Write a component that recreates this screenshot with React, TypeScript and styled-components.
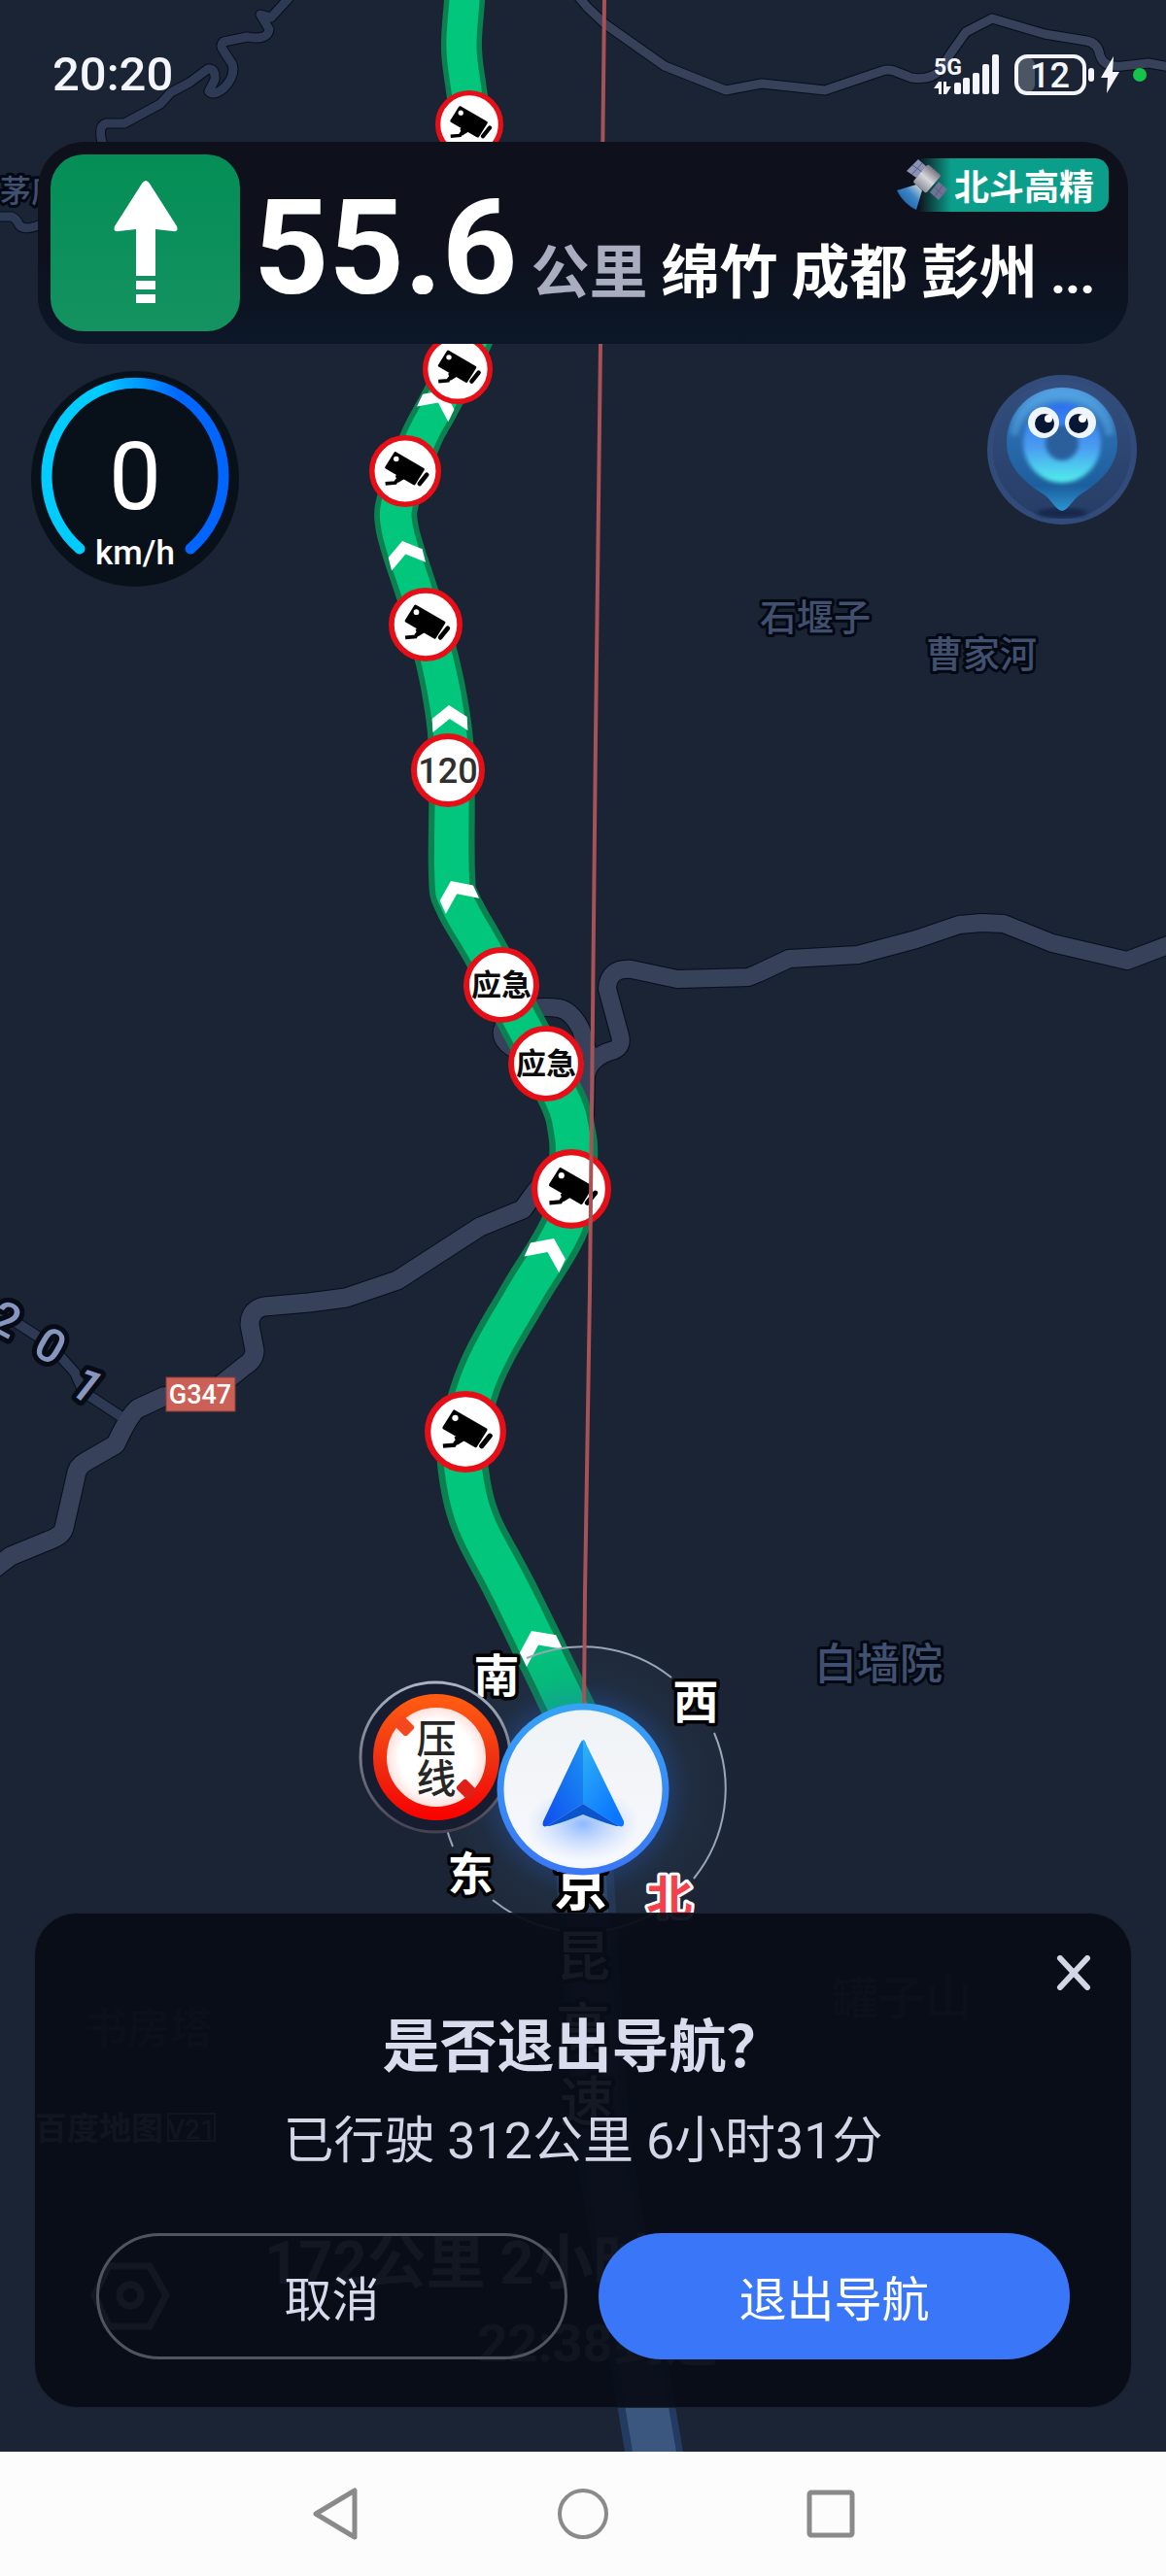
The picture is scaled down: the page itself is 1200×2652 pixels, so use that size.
import React from "react";
import styled, { createGlobalStyle } from "styled-components";

const LATIN = '"Roboto", "Noto Sans CJK SC", sans-serif';
const HAN = '"Noto Sans CJK SC", sans-serif';

const GlobalStyle = createGlobalStyle`
  * { box-sizing: border-box; }
  body { margin: 0; background: #1a2434; font-family: ${LATIN}; }
  button { font: inherit; border: 0; padding: 0; background: none; cursor: pointer; }
`;

/* ---------- shell ---------- */

const Page = styled.div`
  display: flex;
  flex-direction: column;
  min-height: 100vh;
`;

const Stage = styled.main`
  position: relative;
  display: flex;
  flex: 1;
  flex-direction: column;
  overflow: hidden;
  background: #1a2434;
`;

const MapCanvas = styled.svg`
  position: absolute;
  inset: 0;
  width: 100%;
  height: 100%;
`;

const Spacer = styled.div`
  flex: 1;
`;

/* ---------- status bar ---------- */

const StatusBar = styled.div`
  position: relative;
  display: flex;
  align-items: center;
  justify-content: space-between;
  height: 146px;
  padding: 8px 20px 0 54px;
  color: #f3f5fa;
`;

const Clock = styled.time`
  font-size: 49px;
  font-weight: 500;
  line-height: 60px;
`;

const StatusIcons = styled.svg`
  width: 220px;
  height: 48px;
`;

/* ---------- guidance banner ---------- */

const Banner = styled.section`
  position: relative;
  display: flex;
  align-items: center;
  gap: 14px;
  margin: 0 39px;
  padding: 13px;
  border-radius: 48px;
  background: linear-gradient(#0e101b 50%, #0b1728);
`;

const TurnTile = styled.div`
  display: flex;
  align-items: center;
  justify-content: center;
  flex: none;
  width: 195px;
  height: 182px;
  border-radius: 34px;
  background: linear-gradient(#048e56, #149260);
`;

const Guidance = styled.div`
  display: flex;
  align-items: baseline;
  gap: 14px;
  min-width: 0;
  padding-top: 12px;
  white-space: nowrap;
`;

const Distance = styled.strong`
  color: #fff;
  font-size: 135px;
  font-weight: 700;
  line-height: 164px;
`;

const Unit = styled.span`
  color: #a9adbf;
  font: 700 60px/72px ${HAN};
`;

const Places = styled.span`
  color: #fff;
  font: 700 60px/72px ${HAN};
`;

const More = styled.span`
  font: 900 50px/72px ${LATIN};
`;

const PrecisionBadge = styled.div`
  position: absolute;
  top: 17px;
  right: 20px;
  display: flex;
  align-items: center;
  height: 55px;
  padding: 0 15px 0 0;
  border-radius: 0 14px 14px 0;
  background: linear-gradient(90deg, transparent 26px, #0b9f8b 60px);
  color: #fff;
  font: 700 36px/55px ${HAN};
`;

/* ---------- map widgets ---------- */

const Widgets = styled.div`
  position: relative;
  display: flex;
  align-items: flex-start;
  justify-content: space-between;
  padding: 28px 30px 0 32px;
`;

const Speedometer = styled.div`
  position: relative;
  display: flex;
  flex-direction: column;
  align-items: center;
  width: 214px;
  height: 222px;
  padding-top: 60px;
  border-radius: 50%;
  background: #08101a;
  color: #fff;
`;

const SpeedArc = styled.svg`
  position: absolute;
  inset: 0;
`;

const SpeedValue = styled.span`
  font-size: 96px;
  font-weight: 400;
  line-height: 98px;
`;

const SpeedUnit = styled.span`
  font-size: 35px;
  font-weight: 500;
  line-height: 60px;
`;

const Assistant = styled.button`
  margin-top: 4px;
  width: 154px;
  height: 154px;
`;

/* ---------- exit dialog ---------- */

const Dialog = styled.section`
  position: relative;
  display: flex;
  flex-direction: column;
  align-items: center;
  margin: 0 35px 45px;
  padding: 93px 63px 49px;
  border: 1px solid rgba(110, 130, 170, 0.16);
  border-radius: 44px;
  background: rgba(8, 13, 23, 0.95);
  text-align: center;
`;

const DialogTitle = styled.h1`
  margin: 0;
  color: #d9dcec;
  font: 700 59px/80px ${HAN};
`;

const DialogText = styled.p`
  margin: 26px 0 58px;
  color: #d2d6e6;
  font: 400 52px/72px ${LATIN};
`;

const DialogActions = styled.div`
  display: grid;
  grid-template-columns: 1fr 1fr;
  gap: 32px;
  align-self: stretch;
`;

const ActionButton = styled.button<{ $primary?: boolean }>`
  && {
    height: 130px;
    border: ${(p) => (p.$primary ? "0" : "3px solid #50545e")};
    border-radius: 65px;
    background: ${(p) => (p.$primary ? "#3a76f8" : "transparent")};
    color: ${(p) => (p.$primary ? "#fff" : "#d6daea")};
    font: 400 49px/72px ${HAN};
  }
`;

const CloseButton = styled.button`
  position: absolute;
  top: 29px;
  right: 27px;
  display: flex;
  align-items: center;
  justify-content: center;
  width: 64px;
  height: 64px;
`;

/* ---------- system navigation ---------- */

const SystemNav = styled.nav`
  display: flex;
  justify-content: center;
  height: 128px;
  background: #fcfcfc;
`;

const SystemKey = styled.button`
  display: flex;
  align-items: center;
  justify-content: center;
  width: 255px;
`;

/* ---------- map geometry ---------- */

type Knot = [number, number, number];

/* x, y, full width of the road at that point */
const ROUTE: Knot[] = [
  [480, -40, 42], [478, 0, 42], [475, 50, 42], [481, 100, 42], [490, 170, 42],
  [500, 250, 42], [500, 310, 42], [484, 354, 42], [452, 416, 43], [433, 452, 43],
  [411, 510, 44], [409, 545, 44], [431, 616, 44], [450, 680, 45], [462, 745, 46],
  [465, 800, 47], [465, 900, 48], [471, 930, 48], [502, 985, 47], [538, 1055, 47],
  [578, 1130, 48], [588, 1163, 49], [590, 1195, 50], [583, 1257, 50], [541, 1330, 50],
  [508, 1387, 50], [489, 1430, 50], [477, 1480, 51], [477, 1515, 52], [490, 1568, 52],
  [527, 1640, 53], [584, 1757, 54], [604, 1800, 54],
];

function spline(knots: Knot[]): Knot[] {
  const out: Knot[] = [];
  for (let i = 0; i < knots.length - 1; i++) {
    const p0 = knots[Math.max(0, i - 1)];
    const p1 = knots[i];
    const p2 = knots[i + 1];
    const p3 = knots[Math.min(knots.length - 1, i + 2)];
    for (let s = 0; s < 8; s++) {
      const t = s / 8;
      out.push(
        [0, 1, 2].map(
          (k) =>
            0.5 *
            (2 * p1[k] +
              (p2[k] - p0[k]) * t +
              (2 * p0[k] - 5 * p1[k] + 4 * p2[k] - p3[k]) * t * t +
              (3 * p1[k] - p0[k] - 3 * p2[k] + p3[k]) * t * t * t)
        ) as Knot
      );
    }
  }
  out.push(knots[knots.length - 1]);
  return out;
}

function ribbon(knots: Knot[], scale: number): string {
  const pts = spline(knots);
  const left: string[] = [];
  const right: string[] = [];
  pts.forEach(([x, y, w], i) => {
    const a = pts[Math.max(0, i - 1)];
    const b = pts[Math.min(pts.length - 1, i + 1)];
    const dx = b[0] - a[0];
    const dy = b[1] - a[1];
    const len = Math.hypot(dx, dy) || 1;
    const h = (w * scale) / 2;
    left.push(`${(x + (dy / len) * h).toFixed(1)},${(y - (dx / len) * h).toFixed(1)}`);
    right.unshift(`${(x - (dy / len) * h).toFixed(1)},${(y + (dx / len) * h).toFixed(1)}`);
  });
  return [...left, ...right].join(" ");
}

const ROADS: { d: string; w: number; c: string }[] = [
  { w: 9, c: "#2e3a53", d: "M300,-5 L279,18 L268,15 L277,30 Q276,42 254,38 L230,43 Q226,47 230,52 L239,66 Q243,78 230,91 Q220,99 215,94 L221,82 Q222,70 214,71 L195,85 L176,95 L165,107 L128,127 L109,127 Q100,130 106,150" },
  { w: 9, c: "#2e3a53", d: "M-5,223 L12,223 Q17,225 20,232 Q26,238 42,231" },
  { w: 9, c: "#374159", d: "M590,-10 L604,7 L623,25 L684,68 L747,93 L784,86 L849,93 L908,73 Q914,71 920,73 L938,80 Q958,83 968,72 L977,57 L994,33 L1021,19 L1075,35 L1118,42 Q1130,44 1132,57 Q1136,70 1155,68 L1182,65 L1210,70" },
  { w: 10, c: "#2e3a53", d: "M-20,1335 L19,1363 L50,1383 L77,1413 L86,1433 L124,1458" },
  { w: 18, c: "#374159", d: "M602,1150 L603,1108 Q606,1088 632,1081 Q641,1077 638,1066 L625,1018 Q626,996 650,998 L697,1008 L770,1006 L780,1002 L812,987 L883,983 L943,967 L987,952 L1010,950 L1033,951 L1083,971 L1160,989 L1210,970" },
  { w: 18, c: "#374159", d: "M540,1085 Q508,1072 520,1054 Q540,1033 575,1038 Q588,1040 598,1060 L606,1088" },
  { w: 19, c: "#374159", d: "M570,1205 L551,1227 L538,1245 L494,1263 L463,1283 L409,1318 L356,1336 L318,1341 L272,1345 Q257,1348 257,1364 L262,1390 Q262,1400 252,1406 L222,1430 L168,1438 L142,1450 Q134,1455 119,1487 L88,1505 Q79,1510 78,1520 L66,1573 Q64,1581 50,1586 L11,1602 L-10,1618" },
];

const CHEVRONS: [number, number, number, number][] = [
  [457, 402, 26, 1], [414, 557, -14, 1], [462, 726, -3, 1], [464, 907, -25, 1.05],
  [570, 1275, 25, 1.1], [547, 1679, -26, 1.15],
];

const CAMERAS: [number, number, number][] = [
  [483, 128, 35], [471, 380, 36], [417, 485, 37], [438, 643, 38], [588, 1224, 41], [479, 1474, 42],
];

const SIGNS: [number, number, number, string][] = [
  [461, 793, 38, "120"], [516, 1014, 39, "应急"], [562, 1095, 39, "应急"],
];

const Halo = styled.text<{ $size: number; $fill: string; $halo: string; $edge: number; $weight?: number }>`
  font-family: ${LATIN};
  font-size: ${(p) => p.$size}px;
  font-weight: ${(p) => p.$weight ?? 500};
  fill: ${(p) => p.$fill};
  stroke: ${(p) => p.$halo};
  stroke-width: ${(p) => p.$edge}px;
  stroke-linejoin: round;
  paint-order: stroke;
  text-anchor: middle;
`;

const Plain = styled.text<{ $size: number; $fill: string; $weight?: number }>`
  font-family: ${LATIN};
  font-size: ${(p) => p.$size}px;
  font-weight: ${(p) => p.$weight ?? 500};
  fill: ${(p) => p.$fill};
  text-anchor: middle;
`;

function PlaceLabel({ x, y, size, children }: { x: number; y: number; size: number; children: string }) {
  return (
    <Halo x={x} y={y} $size={size} $fill="#40506e" $halo="#030913" $edge={6}>
      {children}
    </Halo>
  );
}

function CompassLabel({ x, y, children }: { x: number; y: number; children: string }) {
  return (
    <Halo x={x} y={y} $size={47} $fill="#fff" $halo="#000" $edge={7} $weight={700}>
      {children}
    </Halo>
  );
}

function Camera({ x, y, r }: { x: number; y: number; r: number }) {
  return (
    <g transform={`translate(${x} ${y}) scale(${r / 40})`}>
      <circle r="37" fill="#fff" stroke="#e60f17" strokeWidth="6" />
      <path d="M-11,-20 L20,-2 L10,14 L-21,-4 Z" fill="#000" stroke="#000" strokeWidth="3" strokeLinejoin="round" />
      <circle cx="-10" cy="-13.500" r="3" fill="#fff" />
      <path d="M24,4 L16,14" stroke="#000" strokeWidth="5" strokeLinecap="round" />
      <path d="M-9,4 L-6,8 Q-9,9 -11,13 L-22,14" fill="none" stroke="#000" strokeWidth="4" />
      <path d="M-11,5 L0,8 L-8,13 Z" fill="#000" />
    </g>
  );
}

function NavigationMap() {
  return (
    <MapCanvas viewBox="0 0 1200 2524" preserveAspectRatio="xMidYMid slice" aria-label="导航地图">
      <defs>
        <linearGradient id="ring" x1="0" y1="0" x2="0" y2="1">
          <stop offset="0" stopColor="#36a2f6" />
          <stop offset="1" stopColor="#3a78f6" />
        </linearGradient>
        <linearGradient id="disc" x1="0" y1="0" x2="0" y2="1">
          <stop offset="0" stopColor="#eef3f6" />
          <stop offset="0.5" stopColor="#f4f5f9" />
          <stop offset="1" stopColor="#f6f9ff" />
        </linearGradient>
        <radialGradient id="glow">
          <stop offset="0.55" stopColor="#2a60c0" stopOpacity="0.3" />
          <stop offset="0.7" stopColor="#2a4a80" stopOpacity="0.12" />
          <stop offset="1" stopColor="#2a4a80" stopOpacity="0" />
        </radialGradient>
        <radialGradient id="shade">
          <stop offset="0" stopColor="#6ea4ff" stopOpacity="0.75" />
          <stop offset="1" stopColor="#a6c8ff" stopOpacity="0" />
        </radialGradient>
        <linearGradient id="wingLeft" x1="1" y1="0" x2="0" y2="1">
          <stop offset="0" stopColor="#1c95f2" />
          <stop offset="1" stopColor="#0f4cf0" />
        </linearGradient>
        <linearGradient id="wingRight" x1="0" y1="0" x2="0.600" y2="1">
          <stop offset="0" stopColor="#2fb4f5" />
          <stop offset="1" stopColor="#0a76ff" />
        </linearGradient>
        <linearGradient id="warn" x1="0" y1="0" x2="0" y2="1">
          <stop offset="0" stopColor="#ff5a12" />
          <stop offset="0.6" stopColor="#ee2a10" />
          <stop offset="1" stopColor="#f80500" />
        </linearGradient>
        <radialGradient id="warnDisc">
          <stop offset="0.65" stopColor="#fff" />
          <stop offset="1" stopColor="#ffd2cc" />
        </radialGradient>
        <linearGradient id="warnEdge" x1="0" y1="0" x2="0" y2="1">
          <stop offset="0" stopColor="#aab4c2" />
          <stop offset="1" stopColor="#46414f" />
        </linearGradient>
      </defs>

      {ROADS.map((r) => (
        <path key={r.d} d={r.d} fill="none" stroke="#070e1d" strokeWidth={r.w + 2} strokeLinejoin="round" />
      ))}
      {ROADS.map((r) => (
        <path key={r.d} d={r.d} fill="none" stroke={r.c} strokeWidth={r.w} strokeLinejoin="round" />
      ))}

      <PlaceLabel x={32} y={208} size={32}>茅庐</PlaceLabel>
      <PlaceLabel x={839} y={649} size={38}>石堰子</PlaceLabel>
      <PlaceLabel x={1010} y={687} size={38}>曹家河</PlaceLabel>
      <PlaceLabel x={904} y={1729} size={44}>白墙院</PlaceLabel>

      {[
        ["2", 6, 1358, 28],
        ["0", 52, 1385, 30],
        ["1", 90, 1426, 38],
      ].map(([ch, x, y, a]) => (
        <g key={ch} transform={`translate(${x} ${y}) rotate(${a})`}>
          <Halo y={17} $size={48} $fill="#8696be" $halo="#060b16" $edge={10}>{ch}</Halo>
        </g>
      ))}
      <rect x="171" y="1418" width="71" height="35" fill="#cb6057" stroke="#8c3d3a" />
      <Plain x={206} y={1445} $size={27} $fill="#fff">G347</Plain>

      {/* road behind the vehicle, seen faintly below the dialog */}
      <polygon points="570,1900 630,1900 648,2200 703,2524 643,2524 590,2200" fill="#243b61" />
      <polygon points="578,1900 622,1900 640,2200 696,2524 651,2524 598,2200" fill="#3b577f" />

      <circle cx="600" cy="1842" r="147" fill="#24303f" fillOpacity="0.45" />
      <polygon points={ribbon(ROUTE, 1)} fill="#0b8152" />
      <polygon points={ribbon(ROUTE, 0.74)} fill="#02c67c" />
      {CHEVRONS.map(([x, y, a, s]) => (
        <path
          key={y}
          transform={`translate(${x} ${y}) rotate(${a}) scale(${s})`}
          d="M0,0 L18,13 V27 L0,14 L-18,27 V13 Z"
          fill="#fff"
        />
      ))}
      {CAMERAS.map(([x, y, r]) => (
        <Camera key={y} x={x} y={y} r={r} />
      ))}
      {SIGNS.map(([x, y, r, label]) => (
        <g key={y}>
          <circle cx={x} cy={y} r={r - 3} fill="#fff" stroke="#e60f17" strokeWidth="6" />
          <Plain
            x={x}
            y={y + (label === "120" ? 13 : 11)}
            $size={label === "120" ? 36 : 31}
            $fill={label === "120" ? "#303030" : "#0c0c0c"}
            $weight={label === "120" ? 500 : 700}
          >
            {label}
          </Plain>
        </g>
      ))}

      {/* compass */}
      <circle cx="600" cy="1842" r="160" fill="url(#glow)" />
      <g fill="none" stroke="#9aa6b6" strokeWidth="2">
        <path d="M542,1707 A147,147 0 0 1 691,1727" />
        <path d="M735,1784 A147,147 0 0 1 714,1934" />
        <path d="M690,1958 A147,147 0 0 1 507,1956" />
        <path d="M466,1901 A147,147 0 0 1 459,1880" />
      </g>
      <path d="M622,0 L618,354 L613,760 L607,1330 L602,1640 L601,1760" fill="none" stroke="#a65256" strokeWidth="4" />
      <CompassLabel x={511} y={1742}>南</CompassLabel>
      <CompassLabel x={716} y={1769}>西</CompassLabel>
      <CompassLabel x={484} y={1946}>东</CompassLabel>
      <Halo x={689} y={1970} $size={47} $fill="#f53f4a" $halo="#fff" $edge={6} $weight={700}>北</Halo>
      <Halo x={598} y={1961} $size={56} $fill="#fff" $halo="#000" $edge={9} $weight={700}>京</Halo>
      <Halo x={600} y={2034} $size={56} $fill="#fff" $halo="#000" $edge={9}>昆</Halo>
      <Halo x={600} y={2108} $size={56} $fill="#fff" $halo="#000" $edge={9}>高</Halo>
      <Halo x={604} y={2184} $size={56} $fill="#fff" $halo="#000" $edge={9}>速</Halo>

      {/* solid-line warning */}
      <circle cx="448" cy="1809" r="77" fill="#161d31" stroke="url(#warnEdge)" strokeWidth="3" />
      <circle cx="449" cy="1809" r="58" fill="url(#warnDisc)" stroke="url(#warn)" strokeWidth="14" />
      <rect x="-9" y="-7" width="18" height="14" rx="3" fill="#f5481e" transform="translate(416 1777) rotate(45)" />
      <rect x="-9" y="-7" width="18" height="14" rx="3" fill="#e02018" transform="translate(480 1842) rotate(45)" />
      <Plain x={449} y={1805} $size={41} $fill="#262626">压</Plain>
      <Plain x={449} y={1846} $size={41} $fill="#262626">线</Plain>

      {/* vehicle */}
      <circle cx="600" cy="1842" r="85" fill="url(#disc)" stroke="url(#ring)" strokeWidth="7" />
      <ellipse cx="600" cy="1878" rx="58" ry="38" fill="url(#shade)" />
      <path d="M597,1795 Q600,1788 603,1795 L600,1857 L563,1880 Q557,1882 559,1875 Z" fill="url(#wingLeft)" />
      <path d="M600,1791 Q602,1791 603,1795 L642,1875 Q643,1882 637,1880 L600,1857 Z" fill="url(#wingRight)" />
      <path d="M600,1857 L637,1880 Q633,1881 600,1868 Q567,1881 563,1880 Z" fill="#0a55cc" />

      {/* trip summary that stays under the dialog */}
      <g opacity="0.9">
        <Plain x={153} y={2104} $size={44} $fill="#40506e">书房塔</Plain>
        <Plain x={928} y={2074} $size={48} $fill="#40506e">罐子山</Plain>
        <Plain x={102} y={2203} $size={33} $fill="#b0b6c4" $weight={700}>百度地图</Plain>
        <rect x="173" y="2176" width="48" height="28" fill="none" stroke="#b0b6c4" strokeWidth="2" />
        <Plain x={197} y={2202} $size={28} $fill="#b0b6c4">V21</Plain>
        <Plain x={472} y={2351} $size={61} $fill="#dfe3ef" $weight={700}>172公里 2小时</Plain>
        <Plain x={615} y={2431} $size={54} $fill="#b8bccb" $weight={700}>22:38到达</Plain>
        <path d="M112,2333 H154 L171,2363 L154,2395 H112 L97,2363 Z" fill="none" stroke="#dfe3ef" strokeWidth="7" />
        <circle cx="134" cy="2363" r="11" fill="none" stroke="#dfe3ef" strokeWidth="7" />
      </g>
    </MapCanvas>
  );
}

const Tiny = styled.text<{ $size: number; $weight: number }>`
  font-family: ${LATIN};
  font-size: ${(p) => p.$size}px;
  font-weight: ${(p) => p.$weight};
  fill: #f3f5fa;
`;

function Satellite() {
  return (
    <svg width="63" height="55" viewBox="0 0 63 55" aria-hidden="true">
      <defs>
        <linearGradient id="beam" x1="1" y1="0" x2="0" y2="1">
          <stop offset="0" stopColor="#e8e2dc" />
          <stop offset="0.4" stopColor="#3d86c6" />
          <stop offset="1" stopColor="#0a4e96" />
        </linearGradient>
        <linearGradient id="hull" x1="0" y1="0" x2="1" y2="0">
          <stop offset="0" stopColor="#8d8f9a" />
          <stop offset="0.5" stopColor="#d7d6dc" />
          <stop offset="1" stopColor="#77757f" />
        </linearGradient>
      </defs>
      <g transform="translate(3 0)">
        <path d="M1,33 L21,27 L27,33 L21,53 Q8,47 1,33 Z" fill="url(#beam)" />
        <path d="M23,1 L32,9 L21,20 L11,13 Z" fill="#8b93b5" />
        <path d="M44,24 L53,32 L44,43 L35,35 Z" fill="#6f7292" />
        <path d="M27,5 L16,17 M17,7 L27,14 M48,28 L40,39 M40,30 L48,37" stroke="#555b7c" strokeWidth="1" />
        <g transform="translate(32 21) rotate(-49)">
          <rect x="-12" y="-9" width="24" height="18" rx="2" fill="url(#hull)" />
        </g>
      </g>
    </svg>
  );
}

export default function App() {
  return (
    <>
      <GlobalStyle />
      <Page>
        <Stage>
          <NavigationMap />

          <StatusBar>
            <Clock>20:20</Clock>
            <StatusIcons viewBox="960 53 220 48" aria-hidden="true">
              <Tiny x="961" y="77" $size={23} $weight={700}>5G</Tiny>
              <path d="M961,91 L966,84 H969 V97 H966 V91 Z M971,84 H974 V89 H979 L974,97 H971 Z" fill="#f3f5fa" />
              {[[982, 85], [991, 80], [1001, 75], [1011, 66], [1021, 56]].map(([x, y]) => (
                <rect key={x} x={x} y={y} width="7" height={97 - y} rx="2" fill="#f3f5fa" />
              ))}
              <rect x="1047" y="59" width="18" height="36" rx="8" fill="#4c5564" />
              <rect x="1046" y="58" width="70" height="38" rx="11" fill="none" stroke="#f3f5fa" strokeWidth="4" />
              <rect x="1120" y="70" width="6" height="14" rx="3" fill="#f3f5fa" />
              <Tiny x="1060" y="90" $size={36} $weight={500}>12</Tiny>
              <path d="M1146,58 L1133,80 H1140 L1139,96 L1152,74 H1145 Z" fill="#f3f5fa" />
              <circle cx="1173" cy="77" r="7" fill="#16c44c" />
            </StatusIcons>
          </StatusBar>

          <Banner>
            <TurnTile>
              <svg width="68" height="128" viewBox="0 0 68 128" role="img" aria-label="直行">
                <path d="M30,3 Q34,-3 38,3 L66,47 Q68,53 62,52 L44,50 V98 H24 V50 L6,52 Q0,53 2,47 Z" fill="#fff" />
                <path d="M24,103 H44 V112 H24 Z M24,117 H44 V126 H24 Z" fill="#fff" />
              </svg>
            </TurnTile>
            <Guidance>
              <Distance>55.6</Distance>
              <Unit>公里</Unit>
              <Places>
                绵竹 成都 彭州 <More>...</More>
              </Places>
            </Guidance>
            <PrecisionBadge>
              <Satellite />
              北斗高精
            </PrecisionBadge>
          </Banner>

          <Widgets>
            <Speedometer>
              <SpeedArc width="214" height="222" viewBox="0 0 214 222" aria-hidden="true">
                <defs>
                  <linearGradient id="arc" x1="0" y1="0" x2="1" y2="0">
                    <stop offset="0.3" stopColor="#00ccff" />
                    <stop offset="0.75" stopColor="#0066ff" />
                  </linearGradient>
                </defs>
                <path d="M50,183 A91,96 0 1 1 164,183" fill="none" stroke="url(#arc)" strokeWidth="11" strokeLinecap="round" />
              </SpeedArc>
              <SpeedValue>0</SpeedValue>
              <SpeedUnit>km/h</SpeedUnit>
            </Speedometer>

            <Assistant type="button" aria-label="语音助手">
              <svg width="154" height="154" viewBox="0 0 154 154" aria-hidden="true">
                <defs>
                  <linearGradient id="halo" x1="0" y1="0" x2="0" y2="1">
                    <stop offset="0" stopColor="#344f7e" />
                    <stop offset="1" stopColor="#263d66" />
                  </linearGradient>
                  <linearGradient id="pin" x1="0" y1="0" x2="0" y2="1">
                    <stop offset="0" stopColor="#4f9de0" />
                    <stop offset="0.35" stopColor="#2a6cae" />
                    <stop offset="0.8" stopColor="#1d5f9e" />
                    <stop offset="1" stopColor="#2a96cf" />
                  </linearGradient>
                  <linearGradient id="face" x1="0" y1="0" x2="0" y2="1">
                    <stop offset="0" stopColor="#2b6ff0" />
                    <stop offset="0.55" stopColor="#4a9cf2" />
                    <stop offset="1" stopColor="#52f0ea" />
                  </linearGradient>
                  <filter id="soft"><feGaussianBlur stdDeviation="2" /></filter>
                </defs>
                <circle cx="77" cy="77" r="74" fill="url(#halo)" stroke="#314c7b" strokeWidth="6" />
                <ellipse cx="77" cy="142" rx="26" ry="5" fill="#17264a" filter="url(#soft)" />
                <path d="M77,13 C109,13 134,38 134,70 C134,94 116,110 99,121 C88,127 84,139 77,140 C70,139 66,127 55,121 C38,110 20,94 20,70 C20,38 45,13 77,13 Z" fill="url(#pin)" />
                <path d="M28,62 C30,38 50,20 77,20 C104,20 124,38 126,62" fill="none" stroke="#5ab0ea" strokeOpacity="0.45" strokeWidth="9" filter="url(#soft)" />
                <ellipse cx="77" cy="70" rx="40" ry="41" fill="url(#face)" filter="url(#soft)" />
                <ellipse cx="77" cy="70" rx="17" ry="18" fill="#2a5f9c" filter="url(#soft)" />
                <circle cx="58" cy="49" r="16" fill="#eef5ff" />
                <circle cx="96" cy="49" r="16" fill="#eef5ff" />
                <circle cx="59" cy="50" r="10" fill="#081733" />
                <circle cx="94" cy="50" r="10" fill="#081733" />
                <circle cx="63" cy="45" r="4" fill="#fff" />
                <circle cx="98" cy="45" r="4" fill="#fff" />
              </svg>
            </Assistant>
          </Widgets>

          <Spacer />

          <Dialog role="dialog" aria-labelledby="exit-title">
            <CloseButton type="button" aria-label="关闭">
              <svg width="36" height="36" viewBox="0 0 36 36" aria-hidden="true">
                <path d="M4,3 L32,33 M32,3 L4,33" stroke="#d3d6e4" strokeWidth="6" strokeLinecap="round" />
              </svg>
            </CloseButton>
            <DialogTitle id="exit-title">是否退出导航？</DialogTitle>
            <DialogText>已行驶 312公里 6小时31分</DialogText>
            <DialogActions>
              <ActionButton type="button">取消</ActionButton>
              <ActionButton type="button" $primary>退出导航</ActionButton>
            </DialogActions>
          </Dialog>
        </Stage>

        <SystemNav>
          <SystemKey type="button" aria-label="返回">
            <svg width="48" height="56" viewBox="0 0 48 56" aria-hidden="true">
              <path d="M44,4 V52 L4,28 Z" fill="none" stroke="#8a8a8a" strokeWidth="5" strokeLinejoin="round" />
            </svg>
          </SystemKey>
          <SystemKey type="button" aria-label="主屏幕">
            <svg width="54" height="54" viewBox="0 0 54 54" aria-hidden="true">
              <circle cx="27" cy="27" r="24" fill="none" stroke="#8a8a8a" strokeWidth="4" />
            </svg>
          </SystemKey>
          <SystemKey type="button" aria-label="最近任务">
            <svg width="50" height="50" viewBox="0 0 50 50" aria-hidden="true">
              <rect x="3" y="3" width="44" height="44" rx="2" fill="none" stroke="#8a8a8a" strokeWidth="5" />
            </svg>
          </SystemKey>
        </SystemNav>
      </Page>
    </>
  );
}
